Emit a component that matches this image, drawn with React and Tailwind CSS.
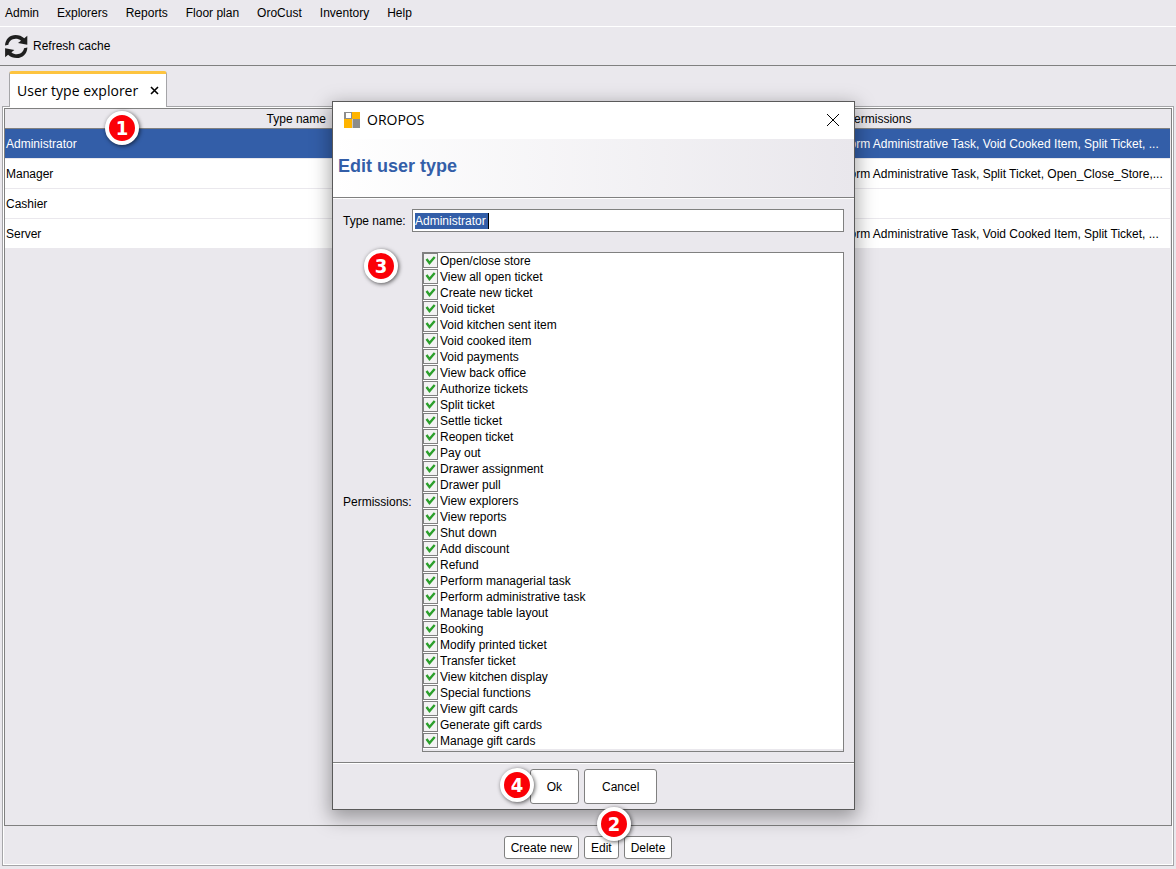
const MENUS = ["Admin", "Explorers", "Reports", "Floor plan", "OroCust", "Inventory", "Help"];

const USER_TYPES = [
  {
    name: "Administrator",
    permissions: "Perform Administrative Task, Void Cooked Item, Split Ticket, ...",
    selected: true,
  },
  {
    name: "Manager",
    permissions: "Perform Administrative Task, Split Ticket, Open_Close_Store,...",
  },
  { name: "Cashier", permissions: "" },
  {
    name: "Server",
    permissions: "Perform Administrative Task, Void Cooked Item, Split Ticket, ...",
  },
];

const PERMISSIONS = [
  "Open/close store",
  "View all open ticket",
  "Create new ticket",
  "Void ticket",
  "Void kitchen sent item",
  "Void cooked item",
  "Void payments",
  "View back office",
  "Authorize tickets",
  "Split ticket",
  "Settle ticket",
  "Reopen ticket",
  "Pay out",
  "Drawer assignment",
  "Drawer pull",
  "View explorers",
  "View reports",
  "Shut down",
  "Add discount",
  "Refund",
  "Perform managerial task",
  "Perform administrative task",
  "Manage table layout",
  "Booking",
  "Modify printed ticket",
  "Transfer ticket",
  "View kitchen display",
  "Special functions",
  "View gift cards",
  "Generate gift cards",
  "Manage gift cards",
];

const REFRESH_ARROW =
  "M1 11.6C1.3 5 6 1 11.5 1C15 1 18 2.2 20.3 4.3L23.3 1.7V10.8L14 9L17 6.8C15.5 5.4 13.6 4.8 11.6 4.8C7.7 4.8 4.8 7.6 4.4 10.8Z";

function RefreshIcon() {
  return (
    <svg viewBox="0 0 24 25" className="w-6 h-[25px]" fill="#1f1f1f" aria-hidden="true">
      <path d={REFRESH_ARROW} />
      <path d={REFRESH_ARROW} transform="rotate(180 12.2 12.5)" />
    </svg>
  );
}

function Logo() {
  return (
    <svg viewBox="0 0 16 16" className="w-4 h-4" shapeRendering="crispEdges" aria-hidden="true">
      <rect width="16" height="16" fill="#c9c9c9" />
      <rect width="8" height="7" fill="#8c8c8c" />
      <rect x="2" y="1" width="5" height="5" fill="#fff" />
      <rect x="8" width="8" height="7" fill="#ffb400" />
      <rect y="7" width="8" height="9" fill="#ffb400" />
      <rect x="9" y="7" width="7" height="9" fill="#8c8c8c" />
    </svg>
  );
}

// Numbered callout, placed by its parent
function Badge({ n, className }) {
  return (
    <span
      className={`absolute z-20 flex items-center justify-center w-[34px] h-[34px] rounded-full border-4 border-white
      bg-[#fb0007] text-white text-xl leading-none font-bold font-['DejaVu_Sans_Condensed','DejaVu_Sans',sans-serif]
      shadow-[1px_1px_4px_0px_rgba(0,0,0,0.65)] ${className}`}
    >
      {n}
    </span>
  );
}

function Permission({ label }) {
  return (
    <label className="flex items-start gap-0.5 h-4 leading-4">
      <span className="grid w-[15px] h-[15px]">
        <input
          type="checkbox"
          defaultChecked
          className="peer [grid-area:1/1] appearance-none w-full h-full border border-[#808080] bg-[#f3f3f3]"
        />
        <svg
          viewBox="0 0 15 15"
          className="[grid-area:1/1] w-full h-full pointer-events-none opacity-0 peer-checked:opacity-100"
          fill="none"
          aria-hidden="true"
        >
          <path d="M3.5 6L6.5 10L11.7 4" stroke="#2ca02c" strokeWidth="2.4" />
        </svg>
      </span>
      {label}
    </label>
  );
}

function EditDialog() {
  return (
    <section
      role="dialog"
      aria-labelledby="dialog-title"
      className="absolute z-10 left-[332px] top-[101px] w-[523px] border border-[#5a5a5a] bg-[#eae8ed]
      shadow-[0_6px_18px_2px_rgba(0,0,0,0.35)]"
    >
      {/* Title bar */}
      <div className="flex items-center h-[37px] pl-[11px] pr-[14px] pb-0.5 bg-white">
        <Logo />
        <span className="pl-[7px] text-sm font-['Open_Sans',sans-serif]">OROPOS</span>
        <button type="button" aria-label="Close" className="ml-auto">
          <svg viewBox="0 0 14 14" className="w-3.5 h-3.5" stroke="#000" fill="none">
            <path d="M1 1L13 13M13 1L1 13" />
          </svg>
        </button>
      </div>

      {/* Heading */}
      <div className="flex h-[59px] pt-4 pl-[5px] border-b border-[#808080] bg-linear-to-r from-white to-[#e9e7ec]">
        <h1 id="dialog-title" className="text-lg leading-[22px] font-bold text-[#335ea8]">
          Edit user type
        </h1>
      </div>

      {/* Form */}
      <div className="border-t border-white px-2.5 pt-2.5 pb-2.5">
        <div className="flex items-center justify-between">
          <label htmlFor="type-name">Type name:</label>
          <div className="flex items-center w-[432px] h-[23px] pl-0.5 border border-[#808080] bg-white">
            <input
              id="type-name"
              type="text"
              defaultValue="Administrator"
              className="w-[74px] h-4 border-r border-black bg-[#335ea8] text-white outline-none"
            />
          </div>
        </div>

        <div className="flex items-center justify-between pt-5">
          <span id="permissions-label">Permissions:</span>
          <div
            role="group"
            aria-labelledby="permissions-label"
            className="w-[422px] border border-[#808080] bg-white"
          >
            {PERMISSIONS.map((p) => (
              <Permission key={p} label={p} />
            ))}
            <div className="h-0.5 bg-[#eae8ed]" />
          </div>
        </div>
      </div>

      {/* Actions */}
      <div className="border-t border-[#808080]">
        <div className="flex justify-center gap-[5px] pt-[5px] pb-[5px] border-t border-white">
          <button type="button" className="h-[35px] px-4 rounded-[3px] border border-[#808080] bg-white">
            Ok
          </button>
          <button type="button" className="h-[35px] px-[17px] rounded-[3px] border border-[#808080] bg-white">
            Cancel
          </button>
        </div>
      </div>

      <Badge n={3} className="left-[31px] top-[147px]" />
      <Badge n={4} className="left-[167px] bottom-[7px]" />
    </section>
  );
}

export default function App() {
  return (
    <main className="relative flex flex-col min-h-screen bg-[#eae8ed] text-black text-xs font-['Liberation_Sans',Arial,sans-serif]">

      {/* Menu bar */}
      <nav className="flex items-center gap-[18px] h-[27px] pl-[5px] border-b border-white">
        {MENUS.map((m) => (
          <button key={m} type="button">{m}</button>
        ))}
      </nav>

      {/* Toolbar */}
      <div className="flex items-center h-[39px] pl-1 border-b border-[#808080]">
        <button type="button" className="flex items-center gap-[5px]">
          <RefreshIcon />
          Refresh cache
        </button>
      </div>

      {/* Tab strip */}
      <div className="flex pt-[5px] pl-[9px]">
        <div
          className="relative z-[1] flex items-center gap-3 h-9 -mb-px px-[7px] rounded-t-[3px] bg-white
          border-x border-[#a5a5a8] border-t-3 border-t-[#fdc43f]"
        >
          <span className="text-sm font-['Open_Sans',sans-serif]">User type explorer</span>
          <button type="button" aria-label="Close tab">
            <svg viewBox="0 0 9 9" className="w-[9px] h-[9px]" stroke="#000" strokeWidth="1.6" fill="none">
              <path d="M1 1L8 8M8 1L1 8" />
            </svg>
          </button>
        </div>
      </div>

      {/* Tab panel */}
      <div className="flex flex-col flex-1 mx-0.5 mb-[3px] border border-[#a5a5a8]">
        <div className="flex flex-col flex-1 border border-white">
          <div className="flex-1 pr-px border border-[#808080]">
            <table className="w-full table-fixed border-collapse">
              <thead>
                <tr className="h-[19px] border-b border-[#808080]">
                  <th className="pt-0.5 font-normal">Type name</th>
                  <th className="pt-0.5 font-normal">Permissions</th>
                </tr>
              </thead>
              <tbody>
                {USER_TYPES.map((t) => (
                  <tr
                    key={t.name}
                    className={`h-[30px] border-b border-[#eae8ed] ${
                      t.selected ? "bg-[#335ea8] text-white" : "bg-white"
                    }`}
                  >
                    <td className="pt-0.5 pl-px">{t.name}</td>
                    <td className="pt-0.5 pl-60 whitespace-nowrap">{t.permissions}</td>
                  </tr>
                ))}
              </tbody>
            </table>
          </div>

          <div className="flex justify-center gap-[5px] pt-2.5 pb-[5px]">
            <button type="button" className="h-[23px] px-1.5 rounded-[3px] border border-[#808080] bg-white">
              Create new
            </button>
            <button type="button" className="h-[23px] px-1.5 rounded-[3px] border border-[#808080] bg-white">
              Edit
            </button>
            <button type="button" className="h-[23px] px-1.5 rounded-[3px] border border-[#808080] bg-white">
              Delete
            </button>
          </div>
        </div>
      </div>

      <Badge n={1} className="left-[105px] top-[111px]" />
      <Badge n={2} className="left-[597px] bottom-7" />
      <EditDialog />
    </main>
  );
}
